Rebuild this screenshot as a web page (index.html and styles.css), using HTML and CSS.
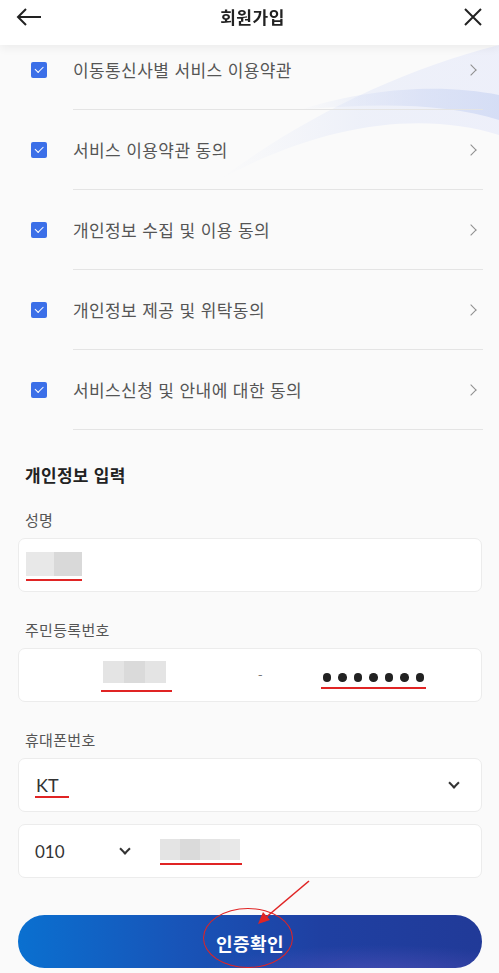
FILE: index.html
```html
<!DOCTYPE html>
<html lang="ko">
<head>
    <meta charset="UTF-8">
    <meta name="viewport" content="width=device-width, initial-scale=1.0">
    <title>회원가입</title>
    <link rel="stylesheet" href="styles.css">
</head>
<body>
    <header class="top-bar">
        <button class="icon-btn" aria-label="뒤로">
            <svg width="26" height="20" viewBox="0 0 26 20"><path d="M25 10H2M10 2L2 10l8 8" fill="none" stroke="#222" stroke-width="2"/></svg>
        </button>
        <h1 class="top-title">회원가입</h1>
        <button class="icon-btn" aria-label="닫기">
            <svg width="20" height="20" viewBox="0 0 20 20"><path d="M2 2l16 16M18 2L2 18" fill="none" stroke="#222" stroke-width="2"/></svg>
        </button>
    </header>

    <svg class="wave" width="320" height="170" viewBox="0 0 320 170">
        <defs>
            <linearGradient id="fadeL" x1="0" y1="0" x2="1" y2="0">
                <stop offset="0" stop-color="#e4e9f8" stop-opacity="0"/>
                <stop offset="0.5" stop-color="#e4e9f8" stop-opacity="0.8"/>
                <stop offset="1" stop-color="#e8ebfa" stop-opacity="1"/>
            </linearGradient>
            <linearGradient id="band" x1="0" y1="0" x2="1" y2="0">
                <stop offset="0" stop-color="#d6def5" stop-opacity="0"/>
                <stop offset="0.6" stop-color="#d6def5" stop-opacity="0.9"/>
                <stop offset="1" stop-color="#cfd9f4" stop-opacity="1"/>
            </linearGradient>
        </defs>
        <path d="M40 140 C120 80 220 30 320 5 L320 95 C240 70 140 85 40 140Z" fill="url(#fadeL)" opacity="0.7"/>
        <path d="M120 70 C200 45 270 45 320 55 L320 80 C270 64 200 62 120 70Z" fill="url(#band)" opacity="0.8"/>
    </svg>

    <main class="page">
        <ul class="terms">
            <li class="term">
                <span class="check"></span>
                <div class="term-body"><span>이동통신사별 서비스 이용약관</span><span class="chev"></span></div>
            </li>
            <li class="term">
                <span class="check"></span>
                <div class="term-body"><span>서비스 이용약관 동의</span><span class="chev"></span></div>
            </li>
            <li class="term">
                <span class="check"></span>
                <div class="term-body"><span>개인정보 수집 및 이용 동의</span><span class="chev"></span></div>
            </li>
            <li class="term">
                <span class="check"></span>
                <div class="term-body"><span>개인정보 제공 및 위탁동의</span><span class="chev"></span></div>
            </li>
            <li class="term">
                <span class="check"></span>
                <div class="term-body"><span>서비스신청 및 안내에 대한 동의</span><span class="chev"></span></div>
            </li>
        </ul>

        <section class="info">
            <h2 class="info-title">개인정보 입력</h2>

            <div class="field first">
                <label class="field-label">성명</label>
                <div class="box">
                    <span class="mark"><span class="blur b1"></span><span class="blur b2"></span></span>
                </div>
            </div>

            <div class="field">
                <label class="field-label">주민등록번호</label>
                <div class="box box-id">
                    <span class="mark id-front"><span class="blur b3"></span><span class="blur b4"></span><span class="blur b3"></span></span>
                    <span class="dash">-</span>
                    <span class="mark dots"><i></i><i></i><i></i><i></i><i></i><i></i><i></i></span>
                </div>
            </div>

            <div class="field">
                <label class="field-label">휴대폰번호</label>
                <div class="box box-select">
                    <span class="mark carrier">KT</span>
                    <span class="down"></span>
                </div>
                <div class="box box-phone">
                    <span class="prefix">010</span>
                    <span class="down"></span>
                    <span class="mark phone-num"><span class="blur b3"></span><span class="blur b4"></span><span class="blur b3"></span><span class="blur b1"></span></span>
                </div>
            </div>

            <div class="submit-wrap">
                <button class="submit">인증확인</button>
                <span class="ring"></span>
                <svg class="arrow" width="60" height="50" viewBox="0 0 60 50">
                    <path d="M55 2L10 40" stroke="#e02424" stroke-width="1.6" fill="none"/>
                    <path d="M4 45L9 33L16 41Z" fill="#e02424"/>
                </svg>
            </div>
        </section>
    </main>
</body>
</html>
```

FILE: styles.css
```css
* {
    box-sizing: border-box;
}
body {
    margin: 0;
    background-color: #fafafa;
    font-family: "Noto Sans CJK KR", "Noto Sans", sans-serif;
    color: #333;
    overflow: hidden;
}
.top-bar {
    position: fixed;
    top: 0;
    left: 0;
    right: 0;
    height: 45px;
    background: #fff;
    box-shadow: 0 3px 9px rgba(0,0,0,0.06);
    display: flex;
    justify-content: space-between;
    align-items: flex-start;
    padding: 5px 16px 0 16px;
    z-index: 10;
}
.icon-btn {
    border: 0;
    background: none;
    padding: 0;
    height: 24px;
    display: flex;
    align-items: center;
}
.top-title {
    margin: 0;
    font-size: 17px;
    line-height: 24px;
    font-weight: 700;
    color: #222;
    letter-spacing: 0.5px;
}
.wave {
    position: absolute;
    top: 40px;
    right: 0;
    z-index: 0;
}
.page {
    position: relative;
    z-index: 1;
    padding-top: 30px;
}
.terms {
    list-style: none;
    margin: 0;
    padding: 0 16px 0 31px;
}
.term {
    display: flex;
    align-items: center;
}
.check {
    width: 16px;
    height: 16px;
    flex: none;
    margin-right: 26px;
    border-radius: 2px;
    background: #3b6fe8;
    position: relative;
}
.check::after {
    content: "";
    position: absolute;
    left: 4px;
    top: 3.5px;
    width: 7px;
    height: 3.5px;
    border-left: 1.6px solid #fff;
    border-bottom: 1.6px solid #fff;
    transform: rotate(-45deg);
}
.term-body {
    flex: 1;
    height: 80px;
    display: flex;
    align-items: center;
    justify-content: space-between;
    border-bottom: 1px solid #e4e4e4;
    font-size: 17px;
    letter-spacing: 0.4px;
    color: #555;
    padding-right: 4px;
}
.chev {
    width: 8px;
    height: 8px;
    border-top: 1.7px solid #8e8e8e;
    border-right: 1.7px solid #8e8e8e;
    transform: rotate(45deg);
    margin-right: 4px;
}
.info {
    padding: 33px 17px 0 18px;
}
.info-title {
    margin: 0 0 0 7px;
    font-size: 17px;
    line-height: 24px;
    font-weight: 600;
    color: #222;
    letter-spacing: 0.3px;
}
.field {
    margin-top: 28px;
}
.field.first {
    margin-top: 23px;
}
.field-label {
    display: block;
    margin: 0 0 8px 7px;
    font-size: 15px;
    line-height: 20px;
    color: #555;
    letter-spacing: 0.3px;
}
.box {
    height: 54px;
    background: #fff;
    border: 1px solid #ececec;
    border-radius: 7px;
    display: flex;
    align-items: center;
    padding: 0 7px;
}
.mark {
    display: inline-flex;
    align-items: flex-end;
    border-bottom: 2px solid #e02424;
    padding-bottom: 3px;
}
.blur {
    display: inline-block;
    height: 24px;
}
.b1 { width: 28px; background: #e8e8e8; }
.b2 { width: 28px; background: #d9d9d9; }
.b3 { width: 21px; background: #e4e4e4; }
.b4 { width: 21px; background: #dadada; }
.box > .mark:first-child {
    margin-top: 2px;
}
.box-id {
    padding: 0;
}
.id-front {
    margin-left: 82px;
    padding-left: 2px;
    padding-right: 6px;
    height: 32px;
    margin-top: 6px;
}
.id-front .blur {
    height: 22px;
    margin-bottom: 4px;
}
.dash {
    margin-left: 86px;
    font-size: 13px;
    color: #777;
    margin-top: -2px;
}
.dots {
    margin-left: 58px;
    gap: 7px;
    padding: 0 2px 5px 2px;
    margin-top: 12px;
}
.dots i {
    width: 8.5px;
    height: 8.5px;
    border-radius: 50%;
    background: #222;
}
.box-select {
    margin-bottom: 12px;
    justify-content: space-between;
    padding: 0 23px 0 16px;
}
.carrier {
    font-family: "Lato", sans-serif;
    font-size: 18px;
    line-height: 22px;
    color: #333;
    padding: 0 10px 0 1px;
    margin-top: 6px;
}
.down {
    width: 8px;
    height: 8px;
    border-right: 2px solid #333;
    border-bottom: 2px solid #333;
    transform: rotate(45deg);
    margin-top: -4px;
}
.box-phone {
    padding-left: 16px;
}
.prefix {
    font-family: "Lato", sans-serif;
    font-size: 17px;
    color: #333;
    width: 86px;
}
.phone-num {
    margin-left: 31px;
    padding-right: 2px;
    margin-top: 2px;
}
.phone-num .blur {
    height: 21px;
    width: 20px;
}
.submit-wrap {
    position: relative;
    margin-top: 37px;
}
.submit {
    width: 100%;
    height: 53px;
    border: 0;
    border-radius: 27px;
    padding-top: 3px;
    background:
        radial-gradient(ellipse 180px 30px at 360px 60px, rgba(110,90,200,0.45), transparent),
        linear-gradient(90deg, #0a70d0 0%, #1854b8 35%, #1f40a2 65%, #213a98 100%);
    color: #fff;
    font-family: "Noto Sans CJK KR", sans-serif;
    font-size: 18px;
    font-weight: 700;
    letter-spacing: 0.5px;
}
.ring {
    position: absolute;
    left: 185px;
    top: -7px;
    width: 90px;
    height: 60px;
    border: 1.5px solid #e02424;
    border-radius: 50%;
}
.arrow {
    position: absolute;
    left: 236px;
    top: -36px;
}
```
